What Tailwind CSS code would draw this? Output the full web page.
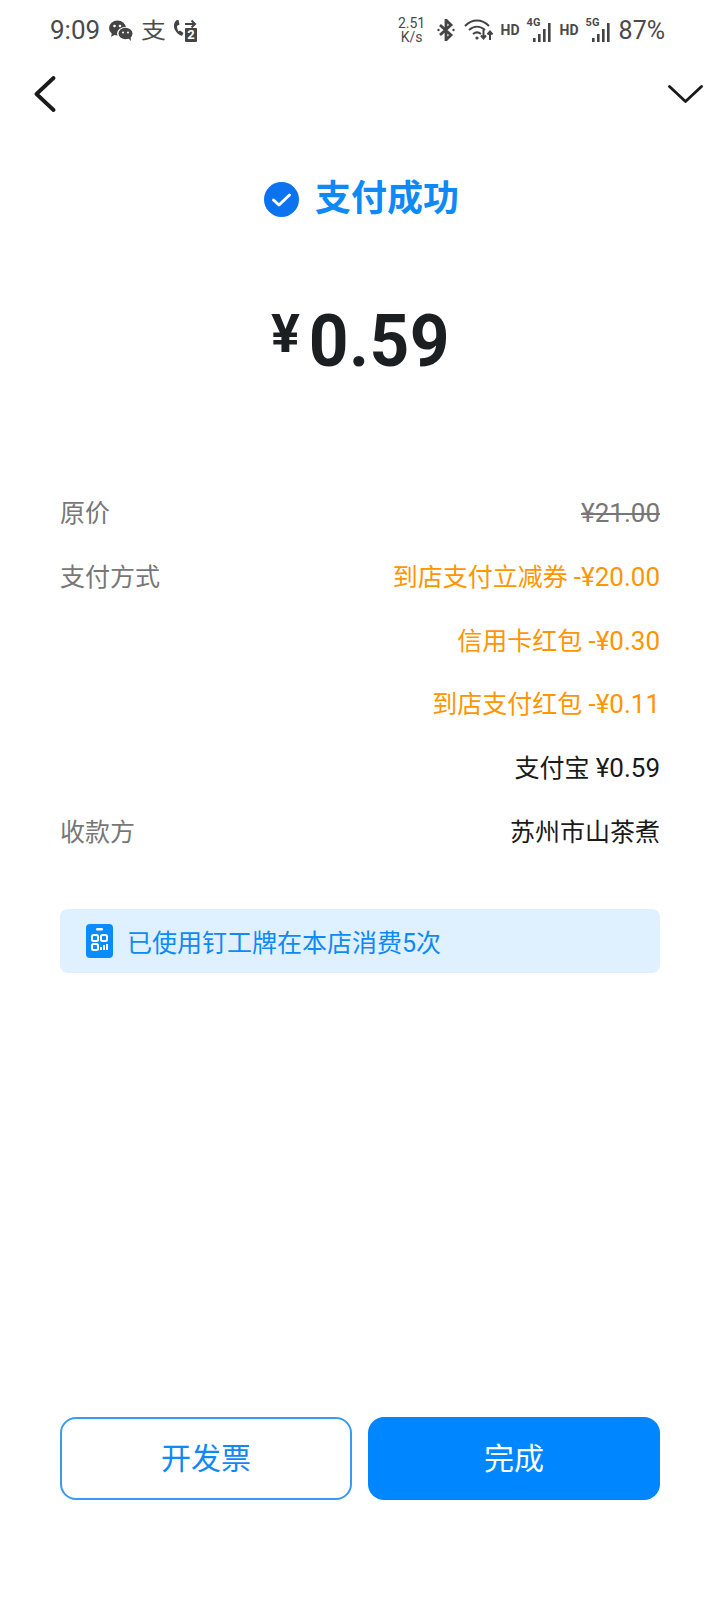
<!DOCTYPE html>
<html lang="zh-CN">

<head>
	<meta charset="UTF-8" />
	<meta name="viewport" content="width=device-width, initial-scale=1.0" />
	<title>支付成功</title>
	<script src="https://cdn.jsdelivr.net/npm/@tailwindcss/browser@4"></script>
</head>

<body class="bg-white font-['Roboto','Noto_Sans_CJK_SC',sans-serif]">
	<div class="w-[720px] h-[1600px] flex flex-col overflow-hidden">
		<!-- status bar -->
		<div class="h-[60px] flex items-center justify-between pl-[50px] pr-[55px] text-[#4a4a4a]">
			<div class="flex items-center">
				<span class="text-[26px] leading-none w-[59px]">9:09</span>
				<svg class="w-[24px] h-[21px]" viewBox="0 0 24 21" fill="#444">
					<ellipse cx="8.500" cy="8" rx="8.500" ry="7.500" />
					<path d="M3 13l-1 4 5-3z" />
					<ellipse cx="16" cy="13.500" rx="8" ry="6.500" fill="#fff" />
					<ellipse cx="16.500" cy="13.500" rx="7" ry="5.800" />
					<path d="M19 18l3 3-.5-4.500z" />
					<circle cx="5.500" cy="6" r="1.300" fill="#fff" />
					<circle cx="11" cy="6" r="1.300" fill="#fff" />
					<circle cx="14" cy="12.500" r="1" fill="#fff" />
					<circle cx="19" cy="12.500" r="1" fill="#fff" />
				</svg>
				<span class="ml-[8px] w-[25px] text-[25px] leading-none scale-y-[.85]">支</span>
				<div class="ml-[7px] relative w-[24px] h-[23px]">
					<svg class="w-[24px] h-[23px]" viewBox="0 0 24 23" fill="none">
						<path d="M4 1C1 3 0 7 2 11c1.500 3 4 5 7 6l1.500-3-3.500-2.500-1.500 1C4.500 11 4 8.500 4 7l2.500-1.500L5.500 1z" fill="#444" />
						<path d="M12 5h10M18.500 1.500L22 5l-3.500 3.500" stroke="#444" stroke-width="2" />
						<rect x="12" y="9" width="12" height="14" rx="1" fill="#444" />
					</svg>
					<span class="absolute left-[12px] top-[9px] w-[12px] text-center text-[13px] leading-[14px] font-bold text-white">2</span>
				</div>
			</div>
			<div class="flex items-center">
				<div class="w-[28px] text-[14px] leading-[14px] text-center">
					<div>2.51</div>
					<div>K/s</div>
				</div>
				<svg class="ml-[11px] w-[18px] h-[22px]" viewBox="0 0 18 22" fill="none" stroke="#444" stroke-width="2.800">
					<path d="M3 6l11 10-5 5V1l5 5L3 16" />
					<circle cx="1.500" cy="11" r="1.200" fill="#444" stroke="none" />
					<circle cx="16.500" cy="11" r="1.200" fill="#444" stroke="none" />
				</svg>
				<svg class="ml-[9px] w-[30px] h-[22px]" viewBox="0 0 30 22" fill="none" stroke="#444" stroke-width="2">
					<path d="M1 7c7-7.500 17-7.500 24 0" />
					<path d="M5 11c5-4.500 11-4.500 16 0" />
					<path d="M9 15c2.500-2 5.500-2 8 0" />
					<circle cx="13" cy="19" r="1.600" fill="#444" stroke="none" />
					<path d="M19.500 11v8M17 16.500l2.500 3 2.500-3M26 21v-8M23.500 15.500l2.500-3 2.500 3" />
				</svg>
				<span class="ml-[7px] w-[18px] text-[14px] leading-none font-bold">HD</span>
				<div class="ml-[8px] relative w-[26px] h-[24px]">
					<span class="absolute left-0 top-[-1px] text-[11px] leading-none font-bold">4G</span>
					<svg class="absolute left-[6px] bottom-0 w-[20px] h-[19px]" viewBox="0 0 20 19" fill="#444">
						<rect x="0" y="15" width="2.600" height="4" />
						<rect x="5" y="11" width="2.600" height="8" />
						<rect x="10" y="6" width="2.600" height="13" />
						<rect x="15" y="0" width="2.600" height="19" />
					</svg>
				</div>
				<span class="ml-[7px] w-[18px] text-[14px] leading-none font-bold">HD</span>
				<div class="ml-[8px] relative w-[26px] h-[24px]">
					<span class="absolute left-0 top-[-1px] text-[11px] leading-none font-bold">5G</span>
					<svg class="absolute left-[6px] bottom-0 w-[20px] h-[19px]" viewBox="0 0 20 19" fill="#444">
						<rect x="0" y="15" width="2.600" height="4" />
						<rect x="5" y="11" width="2.600" height="8" />
						<rect x="10" y="6" width="2.600" height="13" />
						<rect x="15" y="0" width="2.600" height="19" />
					</svg>
				</div>
				<span class="ml-[7px] text-[25px] leading-none">87%</span>
			</div>
		</div>

		<!-- nav -->
		<div class="h-[66px] mt-[1px] flex items-center justify-between pl-[34px] pr-[17px]">
			<svg class="w-[22px] h-[36px]" viewBox="0 0 22 36" fill="none" stroke="#1a1a1a" stroke-width="3.800" stroke-linecap="round" stroke-linejoin="round">
				<path d="M19.500 2L2.500 18l17 16" />
			</svg>
			<svg class="w-[35px] h-[19px]" viewBox="0 0 35 19" fill="none" stroke="#1a1a1a" stroke-width="2.800" stroke-linecap="round" stroke-linejoin="round">
				<path d="M1.500 1.500l16 15 16-15" />
			</svg>
		</div>

		<!-- result header -->
		<div class="mt-[45px] flex items-center justify-center h-[54px] pl-[3px]">
			<svg class="w-[35px] h-[35px]" viewBox="0 0 35 35">
				<circle cx="17.500" cy="17.500" r="17.500" fill="#0b72f0" />
				<path d="M9.500 18l5.500 5 10.500-10" fill="none" stroke="#fff" stroke-width="3" stroke-linecap="round" stroke-linejoin="round" />
			</svg>
			<span class="ml-[16px] text-[36px] leading-none font-bold text-[#0f89f5]">支付成功</span>
		</div>

		<!-- amount -->
		<div class="mt-[71px] h-[88px] flex items-center justify-center pl-[5px] text-[#1c1f22] font-bold">
			<span class="text-[54px] leading-none -mt-[14px]">¥</span>
			<span class="ml-[5px] text-[73px] leading-none tracking-[0.5px] scale-x-95">0.59</span>
		</div>

		<!-- detail rows -->
		<div class="mt-[97px] px-[60px] text-[25px] leading-[63.800px] text-[#777]">
			<div class="flex justify-between">
				<span>原价</span>
				<span class="line-through text-[26px]">¥21.00</span>
			</div>
			<div class="flex justify-between">
				<span>支付方式</span>
				<span class="text-[#ff9500]">到店支付立减券 <span class="text-[26px]">-¥20.00</span></span>
			</div>
			<div class="text-right text-[#ff9500]">信用卡红包 <span class="text-[26px]">-¥0.30</span></div>
			<div class="text-right text-[#ff9500]">到店支付红包 <span class="text-[26px]">-¥0.11</span></div>
			<div class="text-right text-[#1a1a1a]">支付宝 <span class="text-[26px]">¥0.59</span></div>
			<div class="flex justify-between">
				<span>收款方</span>
				<span class="text-[#1a1a1a]">苏州市山茶煮</span>
			</div>
		</div>

		<!-- badge banner -->
		<div class="mt-[44px] mx-[60px] h-[64px] rounded-[8px] bg-[#dff0ff] flex items-center pl-[26px]">
			<svg class="w-[27px] h-[34px]" viewBox="0 0 27 34">
				<rect width="27" height="34" rx="4" fill="#0a8cff" />
				<rect x="10" y="4" width="7" height="2.500" rx="1.250" fill="#fff" />
				<g fill="none" stroke="#fff" stroke-width="2">
					<rect x="6" y="11" width="6" height="6" rx="1.500" />
					<rect x="15" y="11" width="6" height="6" rx="1.500" />
					<rect x="6" y="20" width="6" height="6" rx="1.500" />
				</g>
				<path d="M15 23v3M18 21v5M21 20v6" stroke="#fff" stroke-width="2" />
			</svg>
			<span class="ml-[14px] mt-[5px] text-[25px] leading-none text-[#0f89f5]">已使用钉工牌在本店消费5次</span>
		</div>

		<!-- actions -->
		<div class="mt-auto mb-[100px] px-[60px] flex justify-between">
			<button class="w-[292px] h-[83px] rounded-[16px] border-2 border-[#3b9af0] bg-white text-[30px] text-[#0f89f5]">开发票</button>
			<button class="w-[292px] h-[83px] rounded-[16px] bg-[#0087ff] text-[30px] text-white">完成</button>
		</div>
	</div>
</body>

</html>
